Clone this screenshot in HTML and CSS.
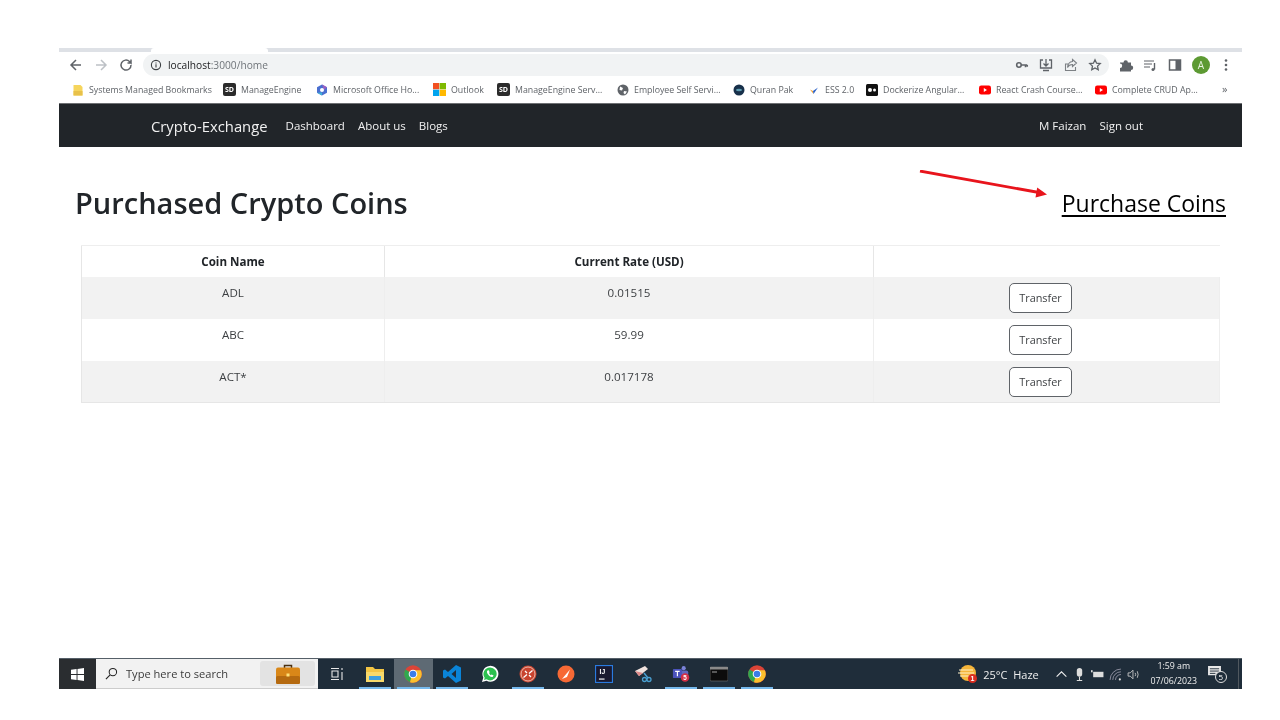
FILE: index.html
```html
<!DOCTYPE html>
<html lang="en">
<head>
<meta charset="utf-8">
<title>Crypto-Exchange</title>
<link rel="stylesheet" href="styles.css">
</head>
<body>
<div class="screen">
  <div class="tabstrip"><div class="tab-gap"></div></div>
  <div class="toolbar">
    <div class="nav-buttons">
      <svg class="tool" viewBox="0 0 16 16"><path d="M13 8H3.500M8 3 3 8l5 5" fill="none" stroke="#5f6368" stroke-width="1.500"/></svg>
      <svg class="tool" viewBox="0 0 16 16"><path d="M3 8h9.500M8 3l5 5-5 5" fill="none" stroke="#bdc1c6" stroke-width="1.500"/></svg>
      <svg class="tool" viewBox="0 0 16 16"><path d="M13 8a5 5 0 1 1-1.500-3.500L13 6V2.500M13 6H9.500" fill="none" stroke="#5f6368" stroke-width="1.500"/></svg>
    </div>
    <div class="omnibox">
      <svg class="info" viewBox="0 0 12 12"><circle cx="6" cy="6" r="4.600" fill="none" stroke="#3c4043" stroke-width="1.100"/><path d="M6 5.200v3.200M6 3.400v1" stroke="#3c4043" stroke-width="1.100"/></svg>
      <span class="url"><span class="host">localhost</span>:3000/home</span>
      <div class="omni-actions">
        <svg class="tool small" viewBox="0 0 16 16"><circle cx="4.500" cy="8" r="2.600" fill="none" stroke="#5f6368" stroke-width="1.800"/><path d="M7 8h7M12 8v2.500M14 8v2" fill="none" stroke="#5f6368" stroke-width="1.800"/></svg>
        <svg class="tool" viewBox="0 0 16 16"><path d="M5 3H2.500v8h11V3H11M8 2v7M5.500 6.500 8 9l2.500-2.500M5 13.500h6" fill="none" stroke="#5f6368" stroke-width="1.300"/></svg>
        <svg class="tool" viewBox="0 0 16 16"><path d="M5 7H2.500v6.500h10V10M9.500 2.500l4 3.500-4 3.500V7.500C7 7.500 5.500 8.500 4.500 10.500 4.800 7 6.500 4.800 9.500 4.500z" fill="none" stroke="#7d8185" stroke-width="1.100"/></svg>
        <svg class="tool small" viewBox="0 0 16 16"><path d="m8 2 1.800 3.900 4.200.5-3.100 2.900.8 4.200L8 11.400l-3.700 2.100.8-4.200L2 6.400l4.200-.5z" fill="none" stroke="#5f6368" stroke-width="1.500"/></svg>
      </div>
    </div>
    <div class="ext-actions">
      <svg class="tool" viewBox="0 0 16 16"><path d="M2 5.500h3.500a2.200 2.200 0 1 1 4.400 0h3.100v3a2.200 2.200 0 1 1 0 4.400V14.500H2v-3.500a2.200 2.200 0 1 0 0-4.400z" fill="#5f6368"/></svg>
      <svg class="tool" viewBox="0 0 16 16"><path d="M2 4h10M2 7h8M2 10h6" fill="none" stroke="#5f6368" stroke-width="1.200"/><path d="M12.500 6v6.500" stroke="#5f6368" stroke-width="1.400"/><circle cx="11" cy="12.500" r="1.500" fill="#5f6368"/></svg>
      <svg class="tool" viewBox="0 0 16 16"><rect x="2.500" y="3" width="11" height="10" fill="none" stroke="#5f6368" stroke-width="1.500"/><rect x="8.500" y="3" width="5" height="10" fill="#5f6368"/></svg>
      <span class="avatar">A</span>
      <svg class="tool" viewBox="0 0 16 16"><circle cx="8" cy="3.500" r="1.300" fill="#5f6368"/><circle cx="8" cy="8" r="1.300" fill="#5f6368"/><circle cx="8" cy="12.500" r="1.300" fill="#5f6368"/></svg>
    </div>
  </div>
  <div class="bookmarks">
    <div class="bm"><svg class="fav" viewBox="0 0 12 12"><path d="M1.500 1h7l2 2v8.500h-9z" fill="#f6d55c"/><rect x="1.500" y="7" width="9" height="4.500" fill="#e8c14a"/></svg><span>Systems Managed Bookmarks</span></div>
    <div class="bm"><span class="sd">SD</span><span>ManageEngine</span></div>
    <div class="bm"><svg class="fav" viewBox="0 0 12 12"><path d="M6 .5 11 3.200v5.600L6 11.500 1 8.800V3.200z" fill="#4a6fd0"/><path d="M6 .5 11 3.200 8 6z" fill="#9b5fc0"/><path d="M1 8.800 6 11.500V8.500z" fill="#3db3d8"/><circle cx="6" cy="6" r="2" fill="#fff"/></svg><span>Microsoft Office Ho...</span></div>
    <div class="bm"><svg class="fav wide" viewBox="0 0 12 12"><rect width="5.800" height="5.800" fill="#f25022"/><rect x="6.200" width="5.800" height="5.800" fill="#7fba00"/><rect y="6.200" width="5.800" height="5.800" fill="#00a4ef"/><rect x="6.200" y="6.200" width="5.800" height="5.800" fill="#ffb900"/></svg><span>Outlook</span></div>
    <div class="bm"><span class="sd">SD</span><span>ManageEngine Serv...</span></div>
    <div class="bm"><svg class="fav" viewBox="0 0 12 12"><circle cx="6" cy="6" r="5.500" fill="#5f6368"/><path d="M3 2.500 6 4 5 6.500 2.500 6zM7 7l3 .5L8 10.500 6.500 9z" fill="#fff"/></svg><span>Employee Self Servi...</span></div>
    <div class="bm"><svg class="fav" viewBox="0 0 12 12"><circle cx="6" cy="6" r="5.500" fill="#17304a"/><ellipse cx="6" cy="6" rx="3" ry="1.200" fill="#5d9bb0"/></svg><span>Quran Pak</span></div>
    <div class="bm"><svg class="fav" viewBox="0 0 12 12"><path d="m2 5.500 3 1.500 .5 3z" fill="#f0a030"/><path d="M5.500 10 10 3.500 5 7z" fill="#2860c8"/></svg><span>ESS 2.0</span></div>
    <div class="bm"><svg class="fav" viewBox="0 0 12 12"><rect width="12" height="12" rx="1.500" fill="#111"/><circle cx="4" cy="6" r="2" fill="#fff"/><circle cx="8.500" cy="6" r="1.500" fill="#fff"/></svg><span>Dockerize Angular...</span></div>
    <div class="bm"><svg class="fav" viewBox="0 0 12 12"><rect y="1.500" width="12" height="9" rx="2.200" fill="#f00"/><path d="m4.800 4 3.200 2-3.200 2z" fill="#fff"/></svg><span>React Crash Course...</span></div>
    <div class="bm"><svg class="fav" viewBox="0 0 12 12"><rect y="1.500" width="12" height="9" rx="2.200" fill="#f00"/><path d="m4.800 4 3.200 2-3.200 2z" fill="#fff"/></svg><span>Complete CRUD Ap...</span></div>
    <div class="bm more">»</div>
  </div>

  <nav class="navbar">
    <a class="brand">Crypto-Exchange</a>
    <div class="nav-links"><a>Dashboard</a><a>About us</a><a>Blogs</a></div>
    <div class="nav-user"><a>M Faizan</a><a>Sign out</a></div>
  </nav>

  <main class="content">
    <div class="page-head">
      <h1>Purchased Crypto Coins</h1>
      <a class="purchase">Purchase Coins</a>
      <svg class="arrow" viewBox="0 0 130 28"><path d="M1 1 120 22.500" stroke="#e8141c" stroke-width="2.800" fill="none"/><path d="m128 24.500-11.500 3 1.700-10z" fill="#e8141c"/></svg>
    </div>
    <table class="coins">
      <thead><tr><th>Coin Name</th><th>Current Rate (USD)</th><th></th></tr></thead>
      <tbody>
        <tr><td>ADL</td><td>0.01515</td><td><button class="btn">Transfer</button></td></tr>
        <tr><td>ABC</td><td>59.99</td><td><button class="btn">Transfer</button></td></tr>
        <tr><td>ACT*</td><td>0.017178</td><td><button class="btn">Transfer</button></td></tr>
      </tbody>
    </table>
  </main>

  <footer class="taskbar">
    <div class="start"><svg class="win" viewBox="0 0 14 14"><path d="M0 2 6 1.100V6.500H0zM7 1 14 0V6.500H7zM0 7.500H6V12.900L0 12zM7 7.500h7V14L7 13z" fill="#fff"/></svg></div>
    <div class="search">
      <svg class="lens" viewBox="0 0 14 14"><circle cx="8.500" cy="5.500" r="4" fill="none" stroke="#222" stroke-width="1.100"/><path d="M5.500 8.500 1 13" stroke="#222" stroke-width="1.200"/></svg>
      <span class="search-text">Type here to search</span>
      <div class="case-box"><svg class="case" viewBox="0 0 24 20"><path d="M8.500 4V1.500h7V4" fill="none" stroke="#4a3010" stroke-width="1.500"/><rect y="3.500" width="24" height="16.500" rx="2" fill="#d98718"/><rect y="12" width="24" height="8" rx="1.500" fill="#b56a10"/><rect x="10.500" y="9.500" width="3" height="3" fill="#ffe27a"/></svg></div>
    </div>
    <div class="apps">
      <div class="app"><svg class="ic task" viewBox="0 0 14 14"><path d="M1 1.500h8M1 12.500h8M2 4h6v6H2zM12 1v2M12 5v8" fill="none" stroke="#e8e8e8" stroke-width="1.100"/></svg></div>
      <div class="app open"><svg class="ic" viewBox="0 0 18 16"><path d="M0 1h7l2 2h9v13H0z" fill="#f3c544"/><rect y="6" width="18" height="10" fill="#f8d96b"/><rect x="3" y="10" width="12" height="4" fill="#3d9fe0"/></svg></div>
      <div class="app active"><svg class="ic" viewBox="0 0 18 18"><use href="#chrome"/></svg></div>
      <div class="app open"><svg class="ic" viewBox="0 0 18 18"><path d="M13 0 18 2.500v13L13 18 5 11l-3 2.500L0 12.500V5.500L2 4.500 5 7zM13 5 8.500 9 13 13z" fill="#0a84d8"/></svg></div>
      <div class="app"><svg class="ic" viewBox="0 0 18 18"><path d="M1 17 2.300 12.500A8 8 0 1 1 5.500 15.800z" fill="#fff"/><path d="M9 2.400a6.500 6.500 0 0 0-5.300 10.300L3 15l2.500-.7A6.500 6.500 0 1 0 9 2.400z" fill="#2bc04f"/><path d="M6.500 5.500c-1 1-.7 2.500.8 4.300s3.200 2.800 4.500 2l.8-1.300-2-1-.8.800C9.500 10 8.500 9 8 8l.7-.8-1-2z" fill="#fff"/></svg></div>
      <div class="app open"><svg class="ic" viewBox="0 0 18 18"><circle cx="9" cy="9" r="8.500" fill="#c8432f"/><circle cx="9" cy="9" r="7" fill="none" stroke="#f3d6c8" stroke-width=".8"/><path d="M4.500 12.500 8 9.500M13.500 5.500 10 8.500M6 6l2 2M12 12l-2-2" stroke="#fff" stroke-width="1.300"/></svg></div>
      <div class="app"><svg class="ic" viewBox="0 0 18 18"><circle cx="9" cy="9" r="8.500" fill="#f76935"/><path d="M5 14 13 4.500 10 12z" fill="#fff"/></svg></div>
      <div class="app"><svg class="ic" viewBox="0 0 16 16"><rect x=".5" y=".5" width="15" height="15" fill="#1a1a30" stroke="#2a7be0"/><text class="ij" x="4" y="8">IJ</text><rect x="3.500" y="12" width="5" height="1" fill="#fff"/></svg></div>
      <div class="app"><svg class="ic" viewBox="0 0 18 18"><path d="M1 6 11 1l3 3L5 11z" fill="#f0e2de"/><path d="M1 6 5 11 9 8z" fill="#d88"/><path d="M10 8l4 5" stroke="#4a9fd0" stroke-width="1.500"/><circle cx="10.500" cy="14.500" r="2" fill="none" stroke="#4a9fd0" stroke-width="1.300"/><circle cx="15" cy="14.500" r="2" fill="none" stroke="#4a9fd0" stroke-width="1.300"/></svg></div>
      <div class="app open"><svg class="ic" viewBox="0 0 20 18"><circle cx="13" cy="2.500" r="2.300" fill="#7b83d8"/><rect x="9" y="5" width="9" height="8" rx="2" fill="#6068c0"/><rect x="1" y="3.500" width="10" height="10" rx="1" fill="#4b53bc"/><path d="M3.500 6h5M6 6v5.500" stroke="#fff" stroke-width="1.300"/><circle cx="14.500" cy="13" r="4.700" fill="#d32f45"/><text class="s-badge" x="14.500" y="15.500">5</text></svg></div>
      <div class="app open"><svg class="ic" viewBox="0 0 18 14"><rect width="18" height="14" rx="1" fill="#0c0c0c" stroke="#777" stroke-width=".6"/><rect width="18" height="2.500" fill="#8a8a8a"/><path d="M2 5h5" stroke="#ccc" stroke-width=".8"/></svg></div>
      <div class="app open"><svg class="ic" viewBox="0 0 18 18"><use href="#chrome"/></svg></div>
    </div>
    <div class="tray">
      <div class="weather">
        <svg class="sun" viewBox="0 0 20 20"><circle cx="10" cy="9" r="8" fill="#f5b53a"/><path d="M1 6h14M0 9h16M2 12h12" stroke="#fff2c8" stroke-width="1"/><circle cx="14.500" cy="14.500" r="4.500" fill="#d92d20"/><text class="s-badge" x="14.500" y="17">1</text></svg>
        <span>25°C&nbsp; Haze</span>
      </div>
      <svg class="tr" viewBox="0 0 12 12"><path d="m1.500 8 4.500-4.500L10.500 8" fill="none" stroke="#eee" stroke-width="1"/></svg>
      <svg class="tr" viewBox="0 0 12 12"><rect x="3.500" y="0" width="5" height="8" rx="2.500" fill="#ddd"/><path d="M6 8v3.500M3.500 11.500h5" stroke="#ddd"/></svg>
      <svg class="tr" viewBox="0 0 12 12"><rect x="2" y="3.500" width="9.500" height="5" fill="#ddd"/><rect x="0" y="2" width="1.500" height="2" fill="#ddd"/></svg>
      <svg class="tr" viewBox="0 0 12 12"><path d="M1 11a10 10 0 0 1 10-10M3.500 11A7.500 7.500 0 0 1 11 3.500M6 11a5 5 0 0 1 5-5" fill="none" stroke="#99a" stroke-width=".8"/><circle cx="10" cy="10.500" r="1" fill="#ddd"/></svg>
      <svg class="tr" viewBox="0 0 12 12"><path d="M1 4.500h2l2.500-2.500v8L3 7.500H1z" fill="none" stroke="#ccc" stroke-width=".8"/><path d="M7.500 4.500q1 1.500 0 3M9.500 3q1.500 3 0 6" fill="none" stroke="#ccc" stroke-width=".8"/></svg>
      <div class="clock"><span>1:59 am</span><span>07/06/2023</span></div>
      <div class="notif">
        <svg class="note" viewBox="0 0 14 13"><path d="M0 0h14v10H0z" fill="#e8e8e8"/><path d="M2 3h10M2 5.500h10M2 8h6" stroke="#1f2d3a"/></svg>
        <span class="count">5</span>
      </div>
      <div class="edge"></div>
    </div>
  </footer>
</div>
<svg class="defs" aria-hidden="true"><defs>
  <g id="chrome">
    <circle cx="9" cy="9" r="8.800" fill="#db4437"/>
    <path d="M9 9 1.400 4.600A8.800 8.800 0 0 0 6 17.300z" fill="#2fa84f"/>
    <path d="M9 5.200h7.800A8.800 8.800 0 0 1 6 17.300z" fill="#fbc02d"/>
    <circle cx="9" cy="9" r="4.300" fill="#fff"/>
    <circle cx="9" cy="9" r="3.300" fill="#3b7de8"/>
  </g>
</defs></svg>
</body>
</html>
```
FILE: styles.css
```css
* { box-sizing: border-box; }
html, body { margin: 0; padding: 0; background: #fff; }
body { font-family: "Open Sans", "Noto Sans", sans-serif; color: #212529; padding: 48px 38px 0 59px; height: 720px; overflow: hidden; }
.screen { height: 641px; display: flex; flex-direction: column; position: relative; filter: blur(0.35px); }
.defs { width: 0; height: 0; position: absolute; }

.tabstrip { height: 4px; background: #dee1e6; padding-left: 92px; flex: none; }
.tab-gap { width: 117px; height: 4px; background: #fff; border-radius: 3px 3px 0 0; }
.toolbar { height: 25px; flex: none; display: flex; align-items: center; background: #fff; }
.nav-buttons { width: 84px; padding-left: 9px; display: flex; gap: 9px; flex: none; }
.tool { width: 16px; height: 16px; flex: none; }
.tool.small { width: 14px; height: 14px; margin: 1px; }
.omnibox { width: 966px; height: 22px; margin-top: 1px; background: #f1f3f4; border-radius: 11px; display: flex; align-items: center; padding-left: 7px; flex: none; }
.info { width: 12px; height: 12px; margin-right: 6px; flex: none; }
.url { font-size: 10.200px; color: #70757a; }
.host { color: #202124; }
.omni-actions { margin-left: auto; display: flex; gap: 8.500px; padding-right: 6px; }
.ext-actions { display: flex; align-items: center; gap: 8.300px; padding-left: 9px; }
.avatar { width: 18px; height: 18px; border-radius: 50%; background: #5d9a33; color: #eaf3e2; font-size: 10px; display: flex; align-items: center; justify-content: center; margin-left: 1px; }

.bookmarks { height: 27px; flex: none; display: grid; grid-template-columns: 151px 93px 117px 64px 120px 116px 75px 58px 113px 116px 127px 20px; padding: 0 0 1px 13px; align-items: center; background: #fff; border-bottom: 1px solid #6e7073; }
.bm { display: flex; align-items: center; gap: 5px; font-size: 8.800px; color: #5f6368; white-space: nowrap; overflow: visible; }
.more { font-size: 11px; margin-top: -2px; }
.fav { width: 12px; height: 12px; flex: none; }
.fav.wide { width: 13px; height: 13px; }
.sd { width: 13px; height: 13px; background: #2b2b2b; color: #fff; border-radius: 2px; font-size: 7px; font-weight: 700; display: flex; align-items: center; justify-content: center; flex: none; }

.navbar { height: 43px; flex: none; background: #212529; display: flex; align-items: center; padding: 0 99px 0 92px; color: #f1f1f1; }
.brand { font-size: 14.800px; margin-right: 18px; }
.nav-links { display: flex; gap: 13px; font-size: 11.500px; }
.nav-user { margin-left: auto; display: flex; gap: 13px; font-size: 11.500px; }

.content { flex: 1; padding: 0 22px; background: #fff; }
.page-head { height: 98px; margin: 0 -6px; padding-top: 37px; display: flex; justify-content: space-between; align-items: flex-start; position: relative; }
h1 { margin: 0; font-size: 29px; font-weight: 600; line-height: 38px; color: #212529; }
.purchase { font-size: 23px; line-height: 38px; color: #000; text-decoration: underline; text-decoration-thickness: 2px; text-underline-offset: 3px; }
.arrow { position: absolute; left: 844px; top: 23px; width: 130px; height: 28px; }

.coins { width: 1139px; border-collapse: collapse; table-layout: fixed; font-size: 11.600px; }
.coins th:nth-child(1) { width: 303px; }
.coins th:nth-child(2) { width: 489px; }
.coins th { height: 31px; padding: 0; font-weight: 700; color: #212529; text-align: center; border-top: 1px solid #eeeeee; border-left: 1px solid #e6e6e6; background: #fff; }
.coins td { height: 42px; padding: 8px 0 0; vertical-align: top; text-align: center; color: #3c3f42; border-left: 1px solid #e6e6e6; border-right: 1px solid #eeeeee; }
.coins tbody tr:nth-child(odd) td { background: #f2f2f2; }
.coins tbody tr:last-child td { border-bottom: 1px solid #e6e6e6; }
.coins td:nth-child(3) { padding: 6px 12px 0 0; }
.btn { width: 63px; height: 30px; padding: 0; font: inherit; font-size: 10.900px; color: #3c3f42; background: #fff; border: 1px solid #5f6368; border-radius: 5px; }

.taskbar { height: 31px; flex: none; display: flex; background: #1f2d3a; border-top: 1px solid #555f68; }
.start { width: 37px; background: #2a2d30; display: flex; align-items: center; justify-content: center; flex: none; }
.win { width: 13px; height: 13px; }
.search { width: 222px; flex: none; background: #f2f2f2; border-bottom: 1px solid #ccc; display: flex; align-items: center; padding-left: 9px; }
.lens { width: 13px; height: 13px; flex: none; margin-right: 8px; }
.search-text { font-size: 11.100px; color: #3a3a3a; }
.case-box { margin-left: auto; margin-right: 3px; width: 55px; height: 25px; background: #e3e3e3; border-radius: 3px; display: flex; align-items: center; justify-content: center; }
.case { width: 24px; height: 20px; }
.apps { display: grid; grid-template-columns: repeat(12, 38.200px); flex: none; }
.app { display: flex; align-items: center; justify-content: center; position: relative; }
.app.active { background: #5e6a74; }
.app.open::after, .app.active::after { content: ""; position: absolute; left: 3px; right: 3px; bottom: 0; height: 2px; background: #76b9ed; }
.ic { width: 18px; height: 18px; }
.ic.task { width: 14px; height: 14px; }
.ij { font-size: 6px; font-weight: 700; fill: #fff; font-family: "Liberation Sans", sans-serif; }
.s-badge { font-size: 7px; font-weight: 700; fill: #fff; text-anchor: middle; font-family: "Liberation Sans", sans-serif; }
.tray { flex: 1; display: flex; align-items: center; padding-left: 182px; color: #eee; }
.weather { display: flex; align-items: center; gap: 5px; font-size: 11px; margin-right: 16px; white-space: nowrap; }
.sun { width: 20px; height: 20px; }
.tr { width: 13px; height: 13px; margin-right: 5px; flex: none; }
.clock { display: flex; flex-direction: column; align-items: center; font-size: 8.800px; line-height: 15px; margin-left: 3px; width: 52px; flex: none; white-space: nowrap; }
.notif { position: relative; width: 20px; height: 18px; margin-left: 8px; flex: none; }
.note { width: 13px; height: 12px; position: absolute; left: 0; top: 1px; }
.count { position: absolute; left: 7px; top: 6px; width: 12px; height: 12px; border-radius: 50%; background: #1f2d3a; border: 1px solid #ddd; font-size: 8px; line-height: 10px; text-align: center; color: #fff; }
.edge { width: 1px; height: 30px; background: #50585f; margin: 0 3px 0 auto; }
```
